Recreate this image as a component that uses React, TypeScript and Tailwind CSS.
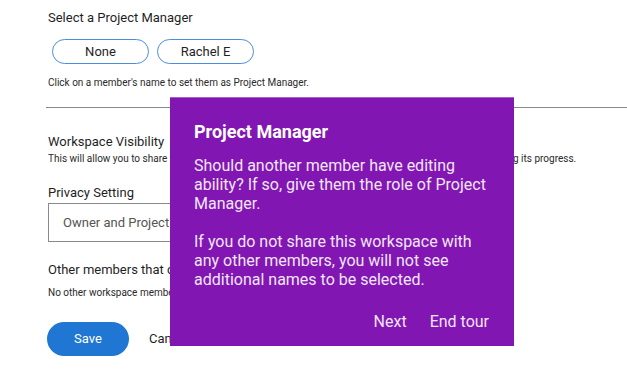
import React from "react";

const members = ["None", "Rachel E"];

export default function App() {
  return (
    <div className="relative w-[627px] h-[374px] overflow-hidden bg-white font-['Roboto',sans-serif] text-[#1f1f1f]">
      <div className="pl-[48px] pt-[10px]">
        <p className="text-[13px] leading-[16px]">Select a Project Manager</p>
        <div className="mt-[13px] flex gap-[8px] pl-[4px]">
          {members.map((m) => (
            <button
              key={m}
              className="h-[25px] w-[97px] rounded-full border border-[#4b8fdc] bg-white text-[13px] text-[#1f1f1f]"
            >
              {m}
            </button>
          ))}
        </div>
        <p className="mt-[12px] text-[10px] leading-[14px] text-[#2a2a2a]">
          Click on a member's name to set them as Project Manager.
        </p>
        <div className="mt-[17px] ml-[-2px] h-px bg-[#8a8a8a]" />

        <p className="mt-[26px] text-[13px] leading-[16px]">Workspace Visibility</p>
        <p className="mt-[2px] text-[10px] leading-[14px] text-[#2a2a2a]">
          This will allow you to share this workspace with other members so they can view it while you keep tracking its progress.
        </p>

        <p className="mt-[19px] text-[13px] leading-[16px]">Privacy Setting</p>
        <div className="mt-[2px] flex h-[39px] w-[320px] items-center border border-[#8a8a8a] pl-[14px] text-[13px] text-[#555]">
          Owner and Project Manager only
        </div>

        <p className="mt-[20px] text-[13px] leading-[16px]">Other members that can view this workspace</p>
        <p className="mt-[8px] text-[10px] leading-[14px] text-[#2a2a2a]">
          No other workspace members have been added yet.
        </p>

        <div className="mt-[22px] ml-[-1px] flex items-center gap-[20px]">
          <button className="h-[34px] w-[82px] rounded-full bg-[#1f77d3] text-[13px] text-white">Save</button>
          <span className="text-[13px] text-[#1f1f1f]">Cancel</span>
        </div>
      </div>

      <div className="absolute left-[170px] top-[97px] flex h-[249px] w-[344px] flex-col border-t border-[#a55fc8] bg-[#8116b3] pl-[24px] pr-[25px] pt-[23px]">
        <h2 className="text-[18px] font-bold leading-[22px] text-white">Project Manager</h2>
        <p className="mt-[13px] text-[16px] leading-[19px] text-[#f1e6f6]">
          Should another member have editing ability? If so, give them the role of Project Manager.
        </p>
        <p className="mt-[19px] text-[16px] leading-[19px] text-[#f1e6f6]">
          If you do not share this workspace with any other members, you will not see additional names to be selected.
        </p>
        <div className="mt-auto mb-[15px] flex justify-end gap-[23px] text-[16px] leading-[19px] text-[#f1e6f6]">
          <button>Next</button>
          <button>End tour</button>
        </div>
      </div>
    </div>
  );
}
